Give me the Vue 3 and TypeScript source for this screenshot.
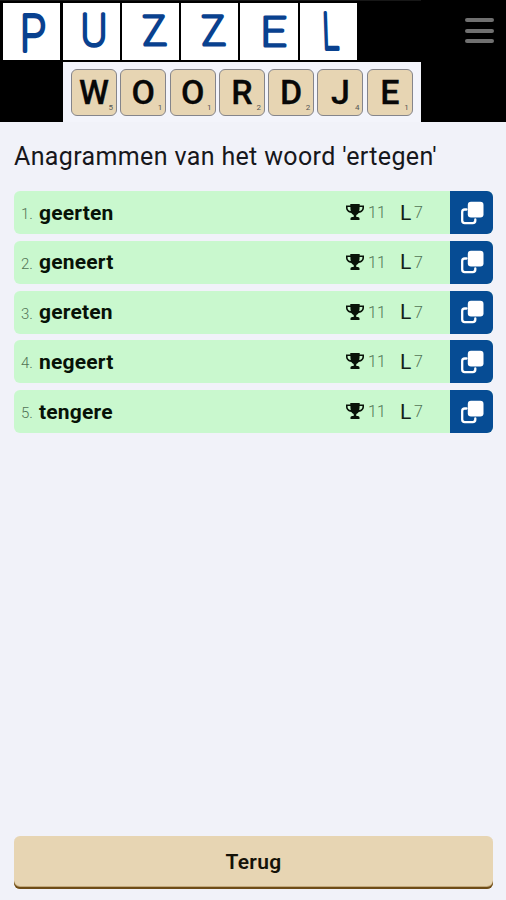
<script setup lang="ts">
interface Tile { letter: string; points: number }
interface Ink { letter: string; sx: number; sy: number; x: number; y: number; skew: number }

const ink: Ink[] = [
  { letter: 'P', sx: 0.92, sy: 1.1, x: 30, y: 48, skew: 0 },
  { letter: 'U', sx: 0.86, sy: 0.97, x: 31, y: 43, skew: 0 },
  { letter: 'Z', sx: 0.88, sy: 0.89, x: 33, y: 42, skew: 3 },
  { letter: 'Z', sx: 0.88, sy: 0.89, x: 33, y: 42, skew: 3 },
  { letter: 'E', sx: 0.98, sy: 0.89, x: 33.5, y: 42.5, skew: 0 },
  { letter: 'L', sx: 0.68, sy: 1.1, x: 31, y: 46, skew: 2 },
]
const tiles: Tile[] = [
  { letter: 'W', points: 5 },
  { letter: 'O', points: 1 },
  { letter: 'O', points: 1 },
  { letter: 'R', points: 2 },
  { letter: 'D', points: 2 },
  { letter: 'J', points: 4 },
  { letter: 'E', points: 1 },
]
const words: string[] = ['geerten', 'geneert', 'gereten', 'negeert', 'tengere']
</script>

<template>
  <div class="page">
    <header class="header">
      <div class="logo">
        <div class="paper-row">
          <svg v-for="(c, i) in ink" :key="i" class="paper" viewBox="0 0 57 57">
            <text text-anchor="middle" :transform="`translate(${c.x} ${c.y}) skewX(${c.skew}) scale(${c.sx} ${c.sy})`">{{ c.letter }}</text>
          </svg>
        </div>
        <div class="tile-row">
          <div v-for="(t, i) in tiles" :key="i" class="tile">
            <span class="tile-letter">{{ t.letter }}</span>
            <span class="tile-points">{{ t.points }}</span>
          </div>
        </div>
      </div>
      <button class="menu" aria-label="Menu"><i></i><i></i><i></i></button>
    </header>

    <main class="main">
      <h1 class="title">Anagrammen van het woord 'ertegen'</h1>
      <ol class="list">
        <li v-for="(w, i) in words" :key="w" class="row">
          <span class="rank">{{ i + 1 }}.</span>
          <span class="word">{{ w }}</span>
          <svg class="trophy" viewBox="0 0 18 16">
            <path d="M4.300 0h9.400v1.500H18v2.300c0 2.900-2.300 4.900-5.300 5.200-.7 1-1.500 1.600-2.400 1.900v2h1.500c1 0 1.700.8 1.700 1.700V16h-9v-1.400c0-.9.7-1.700 1.700-1.700h1.500v-2c-.9-.3-1.700-.9-2.400-1.900C2.300 8.700 0 6.700 0 3.800V1.500h4.300zM4.400 3H1.600v.9c0 1.500 1.200 2.700 3.200 3.200C4.500 5.900 4.400 4.500 4.400 3zm9.200 0c0 1.500-.1 2.900-.4 4.100 2-.5 3.200-1.700 3.200-3.200V3z" />
          </svg>
          <span class="score">11</span>
          <span class="len">L</span>
          <span class="count">7</span>
          <button class="copy" aria-label="Kopieer">
            <svg viewBox="0 0 24 24">
              <path class="back" d="M6.500 8.500H4.800A2.600 2.600 0 0 0 2.200 11.100V19.500A2.600 2.600 0 0 0 4.800 22.100h7.900a2.600 2.600 0 0 0 2.600-2.600v-1" />
              <rect x="7.800" y="0.800" width="15.700" height="15.700" rx="3.200" />
            </svg>
          </button>
        </li>
      </ol>
    </main>

    <footer class="footer"><button class="back-button">Terug</button></footer>
  </div>
</template>

<style>
body { background: #f1f2f9; }
</style>

<style scoped>
.page { height: 900px; display: flex; flex-direction: column; font-family: Roboto, sans-serif; color: #111; background: #f1f2f9; overflow: hidden; }
button { border: 0; padding: 0; font-family: inherit; }
.header { box-sizing: border-box; height: 122px; flex: none; display: flex; justify-content: space-between; background: #000; }
.logo { width: 421px; border-top: 1px solid #171717; box-sizing: border-box; }
.paper-row { display: flex; gap: 2.200px; padding: 2px 0 0 3.300px; height: 59px; }
.paper { width: 57.100px; height: 57px; flex: none; background: #fff; overflow: visible; }
.paper text { font-family: Roboto, sans-serif; font-weight: 100; font-size: 46px; fill: #09418f; stroke: #09418f; stroke-width: 3.600; stroke-linejoin: round; }
.tile-row { box-sizing: border-box; margin-left: 62.500px; height: 60px; display: flex; gap: 3.300px; padding: 7px 0 0 8.500px; background: #f3f4fb; }
.tile { box-sizing: border-box; position: relative; width: 46px; height: 47px; border: 1px solid #85858b; border-radius: 6px; background: #e7d5b3; color: #080808; text-align: center; }
.tile-letter { font-size: 34px; line-height: 45px; font-weight: 500; -webkit-text-stroke: .3px #080808; }
.tile-points { position: absolute; right: 3px; bottom: 3px; font-size: 8px; line-height: 9px; color: #555; }
.menu { width: 29px; height: 25px; margin: 18px 12px 0 0; display: flex; flex-direction: column; justify-content: space-between; background: none; }
.menu i { height: 4px; border-radius: 2px; background: #707070; }
.main { flex: 1; padding: 0 13px 0 14px; }
.title { margin: 19px 0 0; font-size: 25px; font-weight: 400; line-height: 32px; letter-spacing: .36px; color: #17171c; white-space: nowrap; }
.list { list-style: none; margin: 18px 0 0; padding: 0; display: grid; gap: 6.800px; }
.row { height: 43px; display: flex; align-items: center; border-radius: 6px; background: #c9f8ce; overflow: hidden; }
.rank { width: 25px; padding: 3px 0 0 7px; box-sizing: border-box; font-size: 15px; font-weight: 300; color: #527456; white-space: nowrap; }
.word { flex: 1; font-size: 21px; font-weight: 700; line-height: 26px; letter-spacing: .2px; color: #071207; }
.trophy { width: 18px; height: 16px; fill: #091309; margin-bottom: 1px; }
.score { width: 36px; padding-left: 4px; box-sizing: border-box; font-size: 16px; font-weight: 300; color: #527456; }
.len { width: 13px; font-size: 21px; font-weight: 400; line-height: 26px; color: #142116; }
.count { width: 36px; padding-left: 1px; font-size: 16px; font-weight: 300; color: #527456; }
.copy { width: 43px; height: 43px; display: grid; place-items: center; background: #064c94; }
.copy svg { width: 24px; height: 24px; fill: #fff; }
.copy .back { fill: none; stroke: #fff; stroke-width: 2.300; stroke-linecap: round; }
.footer { padding: 0 13px 11px 14px; }
.back-button { display: block; width: 100%; height: 53px; border-radius: 6px; background: #e7d5b3; box-shadow: inset 0 -2px #6e4c17, inset 0 -3px #c4aa7c; font-size: 21px; font-weight: 600; line-height: 51px; color: #151208; letter-spacing: .3px; }
</style>
